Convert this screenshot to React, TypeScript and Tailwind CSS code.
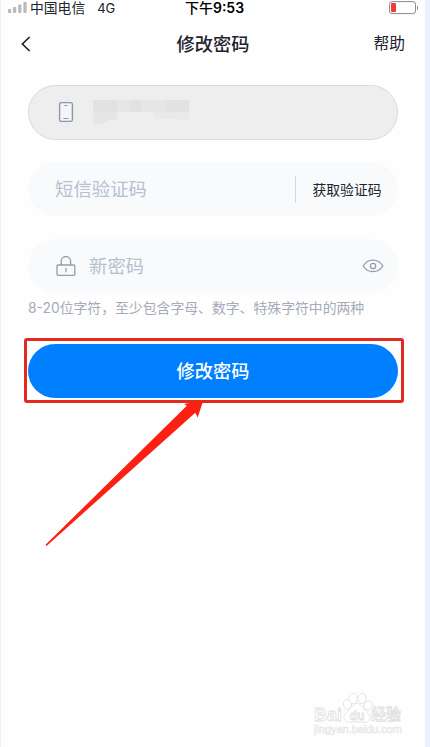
import type { ReactNode } from 'react';

function SignalIcon() {
  return (
    <svg width="20" height="12" viewBox="0 0 20 12" fill="#b9b9bb" className="shrink-0">
      <rect x="0" y="7" width="3.2" height="4" rx="0.8" />
      <rect x="5" y="5" width="3.2" height="6" rx="0.8" />
      <rect x="10.2" y="2.5" width="3.2" height="8.5" rx="0.8" />
      <rect x="15.4" y="0" width="3.2" height="11" rx="0.8" />
    </svg>
  );
}

function BatteryIcon() {
  return (
    <svg width="30" height="14" viewBox="0 0 30 14" fill="none" className="shrink-0">
      <rect x="0.5" y="0.6" width="26" height="12" rx="2.6" stroke="#8b8b8d" />
      <rect x="2" y="2.1" width="5" height="9" rx="1" fill="#ee3b33" />
      <path d="M28 4.8c1.5.5 1.5 3.9 0 4.4z" fill="#8b8b8d" />
    </svg>
  );
}

function PhoneIcon() {
  return (
    <svg width="16" height="22" viewBox="0 0 16 22" fill="none" stroke="#8d99ab" className="shrink-0">
      <rect x="1.6" y="1.6" width="12.8" height="18.8" rx="1.6" strokeWidth="1.4" fill="#f3f5f8" />
      <path d="M6.5 4.5h3M5.4 17.5h5" strokeWidth="1.2" />
    </svg>
  );
}

function LockIcon() {
  return (
    <svg width="20" height="22" viewBox="0 0 20 22" fill="none" stroke="#949cab" strokeWidth="1.3" strokeLinecap="round" className="shrink-0">
      <rect x="1" y="10" width="17.8" height="10.3" rx="1" />
      <path d="M5.2 9.6V6.2a4.7 4.7 0 0 1 9.4 0v3.4M9.9 13.4v3.4" />
    </svg>
  );
}

function EyeIcon() {
  return (
    <svg width="22" height="14" viewBox="0 0 22 14" fill="none" stroke="#949cab" strokeWidth="1.3" className="shrink-0">
      <path d="M1.2 7C3.4 3.4 6.8 1.2 11 1.2S18.6 3.4 20.8 7C18.6 10.6 15.2 12.6 11 12.6S3.4 10.6 1.2 7z" strokeLinejoin="round" />
      <circle cx="11" cy="7" r="2.7" />
    </svg>
  );
}

function MaskedNumber() {
  return (
    <svg width="97" height="24" viewBox="0 0 97 24" className="shrink-0">
      <path d="M0 0H24V20H17L9 24H0z" fill="#e5e5e6" />
      <path d="M61 12H96V20.5L83 19H61z" fill="#e9e9ea" />
      <path d="M24 0h49v12H24z" fill="#e6e6e7" />
      <path d="M0 0h24v12H0zM37 0h11v12H37zM73 0h23v12H73z" fill="#e2e2e3" />
    </svg>
  );
}

function Field({ children }: { children: ReactNode }) {
  return <div className="flex h-[54px] items-center rounded-full bg-[#f8fafc]">{children}</div>;
}

function Watermark() {
  return (
    <div className="absolute top-[690px] left-[311px] h-[46px] w-[92px]">
      <svg width="92" height="46" viewBox="0 0 92 46" fill="#fff" stroke="#dedede" strokeWidth="0.8">
        <ellipse cx="35.5" cy="14.5" rx="4" ry="4.8" transform="rotate(-18 35.5 14.5)" />
        <ellipse cx="41" cy="8.5" rx="4" ry="5.2" />
        <ellipse cx="50" cy="8.5" rx="4" ry="5.2" transform="rotate(12 50 8.5)" />
        <ellipse cx="56" cy="15.5" rx="4" ry="4.8" transform="rotate(25 56 15.5)" />
        <path d="M45 13.5c-4 0-5.5 4.5-8.5 7-3.5 2.5-5 5-4.3 8 .8 3.5 3.8 4.2 6.8 3.8 4-.6 8-.6 12 0 3 .4 6.1-.2 6.7-3.8.5-3-1.3-5-4.2-7.5-3-2.5-4.5-7.5-8.5-7.5z" />
        <g fontFamily="'Liberation Sans', 'Noto Sans CJK SC', sans-serif">
          <text x="2" y="31" fontSize="19" fontWeight="700" textLength="28" lengthAdjust="spacingAndGlyphs">Bai</text>
          <text x="37.5" y="29.5" fontSize="13" fontWeight="700" textLength="15" lengthAdjust="spacingAndGlyphs">du</text>
          <text x="59" y="30" fontSize="15.5" fontWeight="500" textLength="30" lengthAdjust="spacingAndGlyphs">经验</text>
          <text x="2" y="42.5" fontSize="10" stroke="#e6e6e6" strokeWidth="0.6" textLength="88" lengthAdjust="spacingAndGlyphs">jingyan.baidu.com</text>
        </g>
      </svg>
    </div>
  );
}

function Annotation() {
  return (
    <>
      <div className="absolute top-[338px] left-[23px] h-[65px] w-[380px] rounded-[3px] border-3 border-[#e12a20]" />
      <svg className="absolute top-[398px] left-[39px]" width="170" height="152" viewBox="40 398 170 152">
        <path d="M45.5 544.8L186.8 405.8L184 404L203.3 400.5L197.7 417.5L195.3 412.8L46.5 546z" fill="#fc2012" />
      </svg>
    </>
  );
}

export default function App() {
  return (
    <div className="relative h-[747px] w-[430px] overflow-hidden border-r-5 border-l border-r-[#ebf1fa] border-l-[#e8f1f8] bg-[#fefefe] font-['Inter','Noto_Sans_CJK_SC',sans-serif] text-[#20242c]">
      <div className="grid h-[15px] grid-cols-[1fr_auto_1fr] items-center pr-1.5 pl-[7px]">
        <div className="flex items-center">
          <SignalIcon />
          <span className="ml-[2px] text-[13.8px] leading-4">中国电信</span>
          <span className="ml-3 text-[13px] leading-4">4G</span>
        </div>
        <span className="pl-0.5 text-[14px] leading-4 font-semibold text-black">
          <span className="font-medium">下午</span>9:53
        </span>
        <div className="flex justify-end">
          <BatteryIcon />
        </div>
      </div>

      <header className="grid h-[57px] grid-cols-[1fr_auto_1fr] items-center pr-5 pl-5">
        <button type="button" aria-label="返回">
          <svg width="10" height="16" viewBox="0 0 10 16" fill="none" stroke="#20242c" strokeWidth="1.7">
            <path d="M8.6 1L1.4 8l7.2 7" />
          </svg>
        </button>
        <h1 className="text-[18.2px] leading-6 font-medium">修改密码</h1>
        <button type="button" className="text-right text-[15.8px] leading-6">帮助</button>
      </header>

      <main className="px-[27px] pt-[13px]">
        <div className="flex h-[55px] items-center rounded-full border border-[#dadada] bg-[#eeeeef] pb-0.5 pl-[29px]">
          <PhoneIcon />
          <div className="ml-[19px]">
            <MaskedNumber />
          </div>
        </div>

        <div className="mt-[22px]">
          <Field>
            <span className="flex-1 pl-[27px] text-[18.4px] leading-6 text-[#b5c1cf]">短信验证码</span>
            <span className="h-[27px] w-px bg-[#d5d9df]" />
            <button type="button" className="mr-[16.5px] ml-[16.5px] pt-px text-[13.8px] leading-5">获取验证码</button>
          </Field>
        </div>

        <div className="mt-[23px]">
          <Field>
            <div className="flex flex-1 items-center pl-[28px]">
              <LockIcon />
              <span className="ml-[13px] text-[18.4px] leading-6 text-[#b5c1cf]">新密码</span>
            </div>
            <div className="mr-[14px]">
              <EyeIcon />
            </div>
          </Field>
        </div>

        <p className="mt-[5px] text-[13.85px] leading-5 whitespace-nowrap text-[#a5abb8]">
          8-20位字符，至少包含字母、数字、特殊字符中的两种
        </p>

        <button type="button" className="mt-[26px] block h-[54px] w-full rounded-full bg-[#0080ff] text-[18.2px] leading-6 font-medium text-white">
          修改密码
        </button>
      </main>

      <Annotation />
      <Watermark />
    </div>
  );
}
